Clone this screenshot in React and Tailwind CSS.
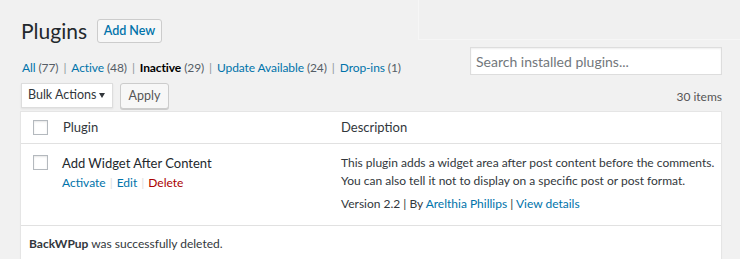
export default function App() {
  const filters = [
    { label: "All", count: "(77)" },
    { label: "Active", count: "(48)" },
    { label: "Inactive", count: "(29)", current: true },
    { label: "Update Available", count: "(24)" },
    { label: "Drop-ins", count: "(1)" },
  ];
  return (
    <div className="relative min-h-screen overflow-hidden bg-[#f1f1f1] font-['Lato',sans-serif] text-[12px] text-[#444]">
      <div className="pointer-events-none absolute left-[418px] right-0 top-0 h-[40px] border-b border-l border-[#f6f6f6] bg-[#f0f0f0]" />
      <div className="relative pl-5 pr-[18px]">
        <div className="flex items-center gap-[10px] pl-px pt-[19px]">
          <h1 className="text-[21px] leading-[24px] text-[#23282d]">Plugins</h1>
          <button className="h-6 w-[65px] rounded-[3px] border border-[#ccc] bg-[#f7f7f7] text-[12.5px] font-semibold leading-none text-[#0073aa]">
            Add New
          </button>
        </div>

        <div className="mt-1 flex items-start justify-between">
          <ul className="mt-[11px] flex whitespace-nowrap pl-[2px] text-[12px] leading-[19px] tracking-[-0.1px] text-[#666]">
            {filters.map((f, i) => (
              <li key={f.label} className="flex">
                {f.current ? (
                  <span className="font-bold text-[#000]">{f.label}</span>
                ) : (
                  <span className="text-[#0073aa]">{f.label}</span>
                )}
                <span className="ml-[3px] text-[#555d66]">{f.count}</span>
                {i < filters.length - 1 && <span className="px-[5px] text-[#8f969c]">|</span>}
              </li>
            ))}
          </ul>
          <input
            readOnly
            placeholder="Search installed plugins..."
            className="h-7 w-[252px] shrink-0 border border-[#ddd] bg-white px-[5px] text-[14px] text-[#32373c] shadow-[inset_0_1px_2px_rgba(0,0,0,0.07)] outline-none placeholder:text-[#72777c]"
          />
        </div>

        <div className="mt-[6px] flex h-[26px] items-center justify-between">
          <div className="flex items-start gap-[7px] pl-px">
            <div className="flex h-[25px] w-[92px] shrink-0 items-center justify-between whitespace-nowrap border border-[#ddd] bg-white pl-[6px] pr-[7px] text-[12.5px] text-[#32373c] shadow-[0_1px_2px_rgba(0,0,0,0.07)]">
              <span>Bulk Actions</span>
              <svg width="6" height="5" viewBox="0 0 6 5" className="shrink-0">
                <path d="M0 0h6L3 5z" fill="#32373c" />
              </svg>
            </div>
            <button className="h-[26px] w-[49px] shrink-0 rounded-[3px] border border-[#ccc] bg-[#f7f7f7] text-[12.5px] leading-none text-[#555] shadow-[0_1px_0_#ccc]">
              Apply
            </button>
          </div>
          <span className="pt-[1px] text-[#555]">30 items</span>
        </div>

        <div className="mt-[2px] border border-[#e5e5e5] bg-white shadow-[0_1px_1px_rgba(0,0,0,0.04)]">
          <div className="flex h-[32px] items-center border-b border-[#e1e1e1] text-[13px] text-[#32373c]">
            <div className="shrink-0 pl-[12px]">
              <div className="h-[15px] w-[15px] border border-[#b4b9be] bg-white shadow-[inset_0_1px_2px_rgba(0,0,0,0.1)]" />
            </div>
            <div className="w-[293px] shrink-0 pl-[15px]">Plugin</div>
            <div className="whitespace-nowrap">Description</div>
          </div>

          <div className="flex h-[82px] border-b border-[#e1e1e1] pt-[10px]">
            <div className="shrink-0 pl-[12px] pt-px">
              <div className="h-[15px] w-[15px] border border-[#b4b9be] bg-white shadow-[inset_0_1px_2px_rgba(0,0,0,0.1)]" />
            </div>
            <div className="w-[293px] shrink-0 pl-[14px] leading-[18px]">
              <div className="text-[13px] text-[#23282d]">Add Widget After Content</div>
              <div className="mt-[2px] flex">
                <span className="text-[#0073aa]">Activate</span>
                <span className="px-[4px] text-[#ddd]">|</span>
                <span className="text-[#0073aa]">Edit</span>
                <span className="px-[4px] text-[#ddd]">|</span>
                <span className="text-[#a00]">Delete</span>
              </div>
            </div>
            <div className="min-w-0 flex-1 whitespace-nowrap leading-[18px] text-[#32373c]">
              <p>This plugin adds a widget area after post content before the comments.</p>
              <p>You can also tell it not to display on a specific post or post format.</p>
              <p className="mt-[5px]">
                Version 2.2 | By <span className="text-[#0073aa]">Arelthia Phillips</span> |{" "}
                <span className="text-[#0073aa]">View details</span>
              </p>
            </div>
          </div>

          <div className="h-[33px] pl-[8px] pt-[9px] leading-[18px] text-[#32373c]">
            <span className="font-bold">BackWPup</span> was successfully deleted.
          </div>
        </div>
      </div>
    </div>
  );
}
